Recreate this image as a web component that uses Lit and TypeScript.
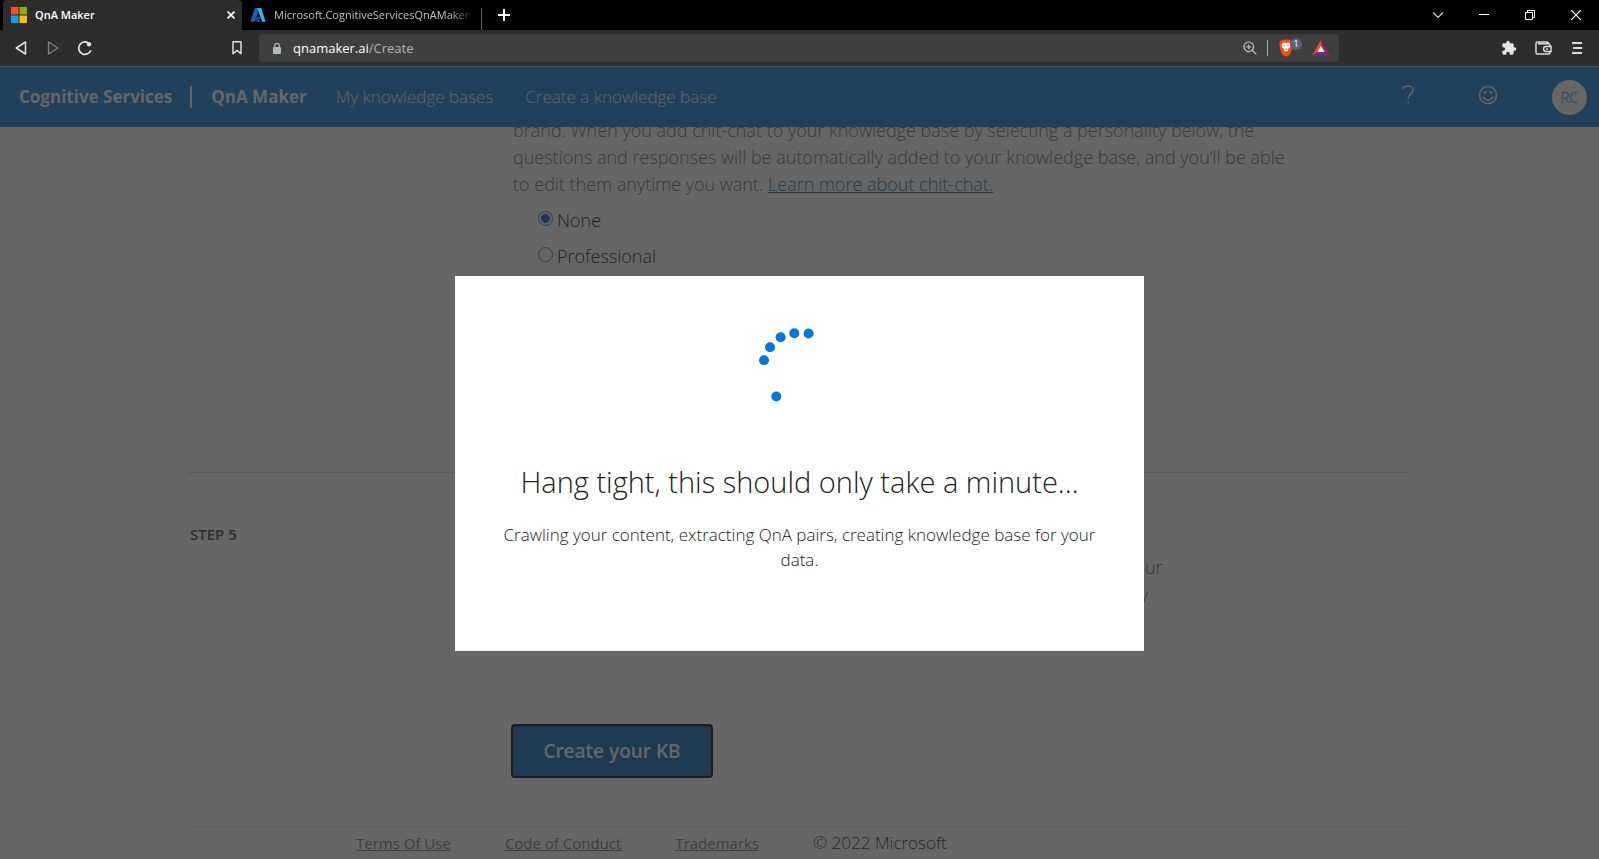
import { LitElement, html, css, svg } from "lit";
import { customElement, property, state } from "lit/decorators.js";

@customElement("browser-chrome")
class BrowserChrome extends LitElement {
  static styles = css`
    :host {
      display: block;
      font-family: "Open Sans", "Noto Sans", sans-serif;
      font-weight: 400;
      color: #fff;
      border-bottom: 1px solid #555;
    }
    button {
      border: 0;
      padding: 0;
      background: none;
      color: inherit;
      font: inherit;
      display: flex;
      align-items: center;
      justify-content: center;
      height: 100%;
    }
    svg { display: block; }
    .tabs {
      display: flex;
      align-items: center;
      height: 30px;
      background: #000;
      padding-left: 3px;
      font-size: 11px;
    }
    .tab {
      display: flex;
      align-items: center;
      box-sizing: border-box;
      width: 239px;
      height: 30px;
      padding: 0 7px 0 8px;
      gap: 8px;
    }
    .active {
      background: #2d2d2d;
      border-radius: 4px 4px 0 0;
      font-weight: 600;
    }
    .tab-title {
      flex: 1;
      overflow: hidden;
      white-space: nowrap;
    }
    .faded {
      color: #c4c4c4;
      mask-image: linear-gradient(to right, #000 88%, transparent);
    }
    .tab-line { width: 1px; height: 22px; background: #666; align-self: flex-end; }
    .plus { width: 44px; }
    .window { display: flex; height: 100%; margin-left: auto; }
    .window button { width: 46px; }
    .toolbar {
      display: flex;
      align-items: center;
      height: 36px;
      background: #2d2d2d;
    }
    .side {
      display: flex;
      align-items: center;
      box-sizing: border-box;
      width: 259px;
      height: 28px;
      padding: 0 6px 0 5px;
    }
    .side button { width: 32px; }
    .bookmark { margin-left: auto; }
    .side.extras { width: 260px; justify-content: flex-end; padding: 0 5px; }
    .side.extras button { width: 34px; }
    .address {
      flex: 1;
      display: flex;
      align-items: center;
      height: 28px;
      box-sizing: border-box;
      padding: 0 1px 0 13px;
      background: #3f3f3f;
      border-radius: 4px;
      font-size: 13px;
    }
    .url { margin-left: 11px; flex: 1; color: #b4b4b4; }
    .url b { color: #fff; font-weight: 400; }
    .address button { width: 35px; position: relative; }
    .bar-line { width: 1px; height: 16px; background: #aaa; }
    .count {
      position: absolute;
      left: 22px;
      top: 4px;
      width: 12px;
      height: 12px;
      border-radius: 6px;
      background: #5f6172;
      font-size: 9px;
      line-height: 12px;
    }
  `;

  render() {
    return html`
      <div class="tabs">
        <div class="tab active">
          <svg width="16" height="16" viewBox="0 0 16 16">
            <path fill="#f8511d" d="M0 0h7.5v7.5H0z" />
            <path fill="#80b903" d="M8.500 0H16v7.500H8.500z" />
            <path fill="#05a4f1" d="M0 8.500h7.500V16H0z" />
            <path fill="#ffba08" d="M8.500 8.500H16V16H8.500z" />
          </svg>
          <span class="tab-title">QnA Maker</span>
          <button aria-label="Close tab">
            <svg width="8" height="8" viewBox="0 0 8 8" stroke="#fff" stroke-width="1.6">
              <path d="M.5.5l7 7M7.500.5l-7 7" />
            </svg>
          </button>
        </div>
        <div class="tab">
          <svg width="16" height="16" viewBox="0 0 16 16">
            <path fill="#1565b4" d="M5.300 1h4.200L5.200 14.300a.8.8 0 0 1-.7.5H1.400a.7.7 0 0 1-.7-1L4.600 1.500A.8.8 0 0 1 5.300 1z" />
            <path fill="#0c4fa0" d="M5 10h6l-1.200 2.200H8l3 2.700H7.500L3.500 11z" />
            <path fill="#35b5ef" d="M6.500 1h4.200c.3 0 .6.200.7.500l3.900 12.300c.2.500-.1 1-.7 1h-3.300c.5 0 .8-.5.6-1L7.300 1.500A.8.8 0 0 0 6.500 1z" />
          </svg>
          <span class="tab-title faded">Microsoft.CognitiveServicesQnAMaker</span>
        </div>
        <span class="tab-line"></span>
        <button class="plus" aria-label="New tab">
          <svg width="12" height="12" viewBox="0 0 12 12" stroke="#fff" stroke-width="2">
            <path d="M6 0v12M0 6h12" />
          </svg>
        </button>
        <div class="window">
          <button aria-label="Search tabs">
            <svg width="12" height="12" viewBox="0 0 12 12" fill="none" stroke="#ddd" stroke-width="1.1">
              <path d="M1 3.500l5 5 5-5" />
            </svg>
          </button>
          <button aria-label="Minimize">
            <svg width="10" height="10" viewBox="0 0 10 10"><path fill="#fff" d="M0 4h10v1H0z" /></svg>
          </button>
          <button aria-label="Restore">
            <svg width="10" height="10" viewBox="0 0 10 10" fill="none" stroke="#fff">
              <path d="M.5 2.500h7v7h-7zM2.500 2.500v-2h7v7h-2" />
            </svg>
          </button>
          <button aria-label="Close">
            <svg width="10" height="10" viewBox="0 0 10 10" stroke="#fff" stroke-width="1.200">
              <path d="M0 0l10 10M10 0L0 10" />
            </svg>
          </button>
        </div>
      </div>
      <div class="toolbar">
        <div class="side">
          <button aria-label="Back">
            <svg width="14" height="16" viewBox="0 0 14 16" fill="none" stroke="#e4e4e4" stroke-width="1.500" stroke-linejoin="round">
              <path d="M11.500 2v12L2.200 8z" />
            </svg>
          </button>
          <button aria-label="Forward">
            <svg width="14" height="16" viewBox="0 0 14 16" fill="none" stroke="#808080" stroke-width="1.400" stroke-linejoin="round">
              <path d="M2.500 2v12l9.300-6z" />
            </svg>
          </button>
          <button aria-label="Reload">
            <svg width="16" height="16" viewBox="0 0 16 16" fill="none" stroke="#e4e4e4" stroke-width="1.700">
              <path d="M13.800 10.200A6.200 6.200 0 1 1 11 2.800" />
              <circle cx="12" cy="4.200" r="2.200" fill="#e4e4e4" stroke="none" />
            </svg>
          </button>
          <button class="bookmark" aria-label="Bookmark this tab">
            <svg width="12" height="16" viewBox="0 0 12 16" fill="none" stroke="#e4e4e4" stroke-width="1.400" stroke-linejoin="round">
              <path d="M2 1.800h8v12l-4-3.400-4 3.400z" />
            </svg>
          </button>
        </div>
        <div class="address">
          <svg width="10" height="13" viewBox="0 0 10 13">
            <path d="M2.700 6V3.600a2.300 2.300 0 0 1 4.600 0V6" fill="none" stroke="#b4b7bb" stroke-width="1.200" />
            <rect x="1" y="5" width="8" height="7" rx="1" fill="#b4b7bb" />
          </svg>
          <span class="url"><b>qnamaker.ai</b>/Create</span>
          <button aria-label="Zoom">
            <svg width="14" height="14" viewBox="0 0 14 14" fill="none" stroke="#c4c4c4" stroke-width="1.200">
              <circle cx="5.800" cy="5.800" r="4.800" />
              <path d="M9.300 9.300l4 4M5.800 3.400v4.800M3.400 5.800h4.800" />
            </svg>
          </button>
          <span class="bar-line"></span>
          <button aria-label="Brave Shields">
            <svg width="14" height="18" viewBox="0 0 14 18">
              <path fill="#fb4b0b" d="M4 .5h6l1.400 1.300 1.300-.1 1.100 2-.5 1.500.4 1.300-2.100 7.800c-.2.900-3.500 3.100-4.600 3.500C5.900 17.400 2.600 15.200 2.400 14.300L.3 6.500l.4-1.300-.5-1.500 1.100-2 1.300.1z" />
              <path fill="#fff" d="M4.200 3.600l2.800.4 2.800-.4 1.800 2.300-.8 1.300.2 1-2 1.700.3 1.300L7 12.800l-2.300-1.600.3-1.300-2-1.700.2-1-.8-1.300z" />
              <path fill="#fb4b0b" d="M3.600 6l2.300.6-.4 1zM10.400 6l-2.300.6.4 1zM5.800 10.300L7 9.600l1.200.7L7 11z" />
            </svg>
            <span class="count">1</span>
          </button>
          <button aria-label="Brave Rewards">
            <svg width="18" height="16" viewBox="0 0 18 16">
              <path fill="#ff4724" d="M9 0L0 15.500l6-3.800L9 6z" />
              <path fill="#9e1f63" d="M9 0l9 15.500-6-3.800L9 6z" />
              <path fill="#662d91" d="M0 15.500h18l-6-3.800H6z" />
              <path fill="#fff" d="M9 5.800l3.500 6.200h-7z" />
            </svg>
          </button>
        </div>
        <div class="side extras">
          <button aria-label="Extensions">
            <svg width="16" height="16" viewBox="0 0 24 24">
              <path fill="#e4e4e4" d="M20.500 11H19V7c0-1.100-.9-2-2-2h-4V3.500a2.500 2.500 0 0 0-5 0V5H4c-1.100 0-2 .9-2 2v3.800h1.500a2.700 2.700 0 0 1 0 5.400H2V20c0 1.100.9 2 2 2h3.800v-1.500a2.700 2.700 0 0 1 5.400 0V22H17c1.100 0 2-.9 2-2v-4h1.500a2.500 2.500 0 0 0 0-5z" />
            </svg>
          </button>
          <button aria-label="Wallet">
            <svg width="17" height="14" viewBox="0 0 17 14" fill="none" stroke="#dcdcdc" stroke-width="1.500">
              <path d="M15 4.800V4.300a1.500 1.500 0 0 0-1.500-1.500H3M13.500 2.800A1.800 1.800 0 0 0 11.700 1H2.500A1.500 1.500 0 0 0 1 2.500v9A1.500 1.500 0 0 0 2.500 13h11a1.500 1.500 0 0 0 1.500-1.500V11M16 5.600h-5a2.400 2.400 0 0 0 0 4.800h5z" />
              <path d="M11 8h2" />
            </svg>
          </button>
          <button aria-label="Menu">
            <svg width="10" height="12" viewBox="0 0 10 12"><path fill="#dcdcdc" d="M0 0h10v2H0zM1 5h9v2H1zM0 10h10v2H0z" /></svg>
          </button>
        </div>
      </div>
    `;
  }
}

@customElement("site-header")
class SiteHeader extends LitElement {
  static styles = css`
    :host {
      display: flex;
      align-items: center;
      height: 60px;
      box-sizing: border-box;
      padding: 0 12px 0 19px;
      background: #50a0e4;
      color: #fff;
      font-family: "Open Sans", "Noto Sans", sans-serif;
      font-size: 17px;
      white-space: nowrap;
    }
    a { color: inherit; text-decoration: none; }
    .brand { font-weight: 700; }
    .divider { width: 2px; height: 22px; margin: 0 19px 0 18px; background: #fff; }
    nav { display: flex; gap: 32px; margin-left: 29px; font-weight: 300; }
    .actions { display: flex; align-items: center; margin-left: auto; }
    button { border: 0; padding: 0; background: none; color: inherit; font: inherit; }
    .icon {
      display: flex;
      align-items: center;
      justify-content: center;
      width: 80px;
      padding-bottom: 4px;
    }
    .avatar {
      width: 35px;
      height: 35px;
      margin-left: 24px;
      border-radius: 50%;
      background: #fff;
      color: #50a0e4;
      font-size: 15px;
    }
  `;

  render() {
    return html`
      <a class="brand" href="#services">Cognitive Services</a>
      <span class="divider"></span>
      <a class="brand" href="#maker">QnA Maker</a>
      <nav>
        <a href="#bases">My knowledge bases</a>
        <a href="#create">Create a knowledge base</a>
      </nav>
      <div class="actions">
        <button class="icon" aria-label="Help">
          <svg width="12" height="20" viewBox="0 0 12 20" fill="none" stroke="#fff" stroke-width="1.300">
            <path d="M1 4.200C1.600 2 3.500 1 5.800 1 8.700 1 11 2.700 11 5.400 11 9 6.300 9.300 6.300 14" />
            <path d="M6.300 16.500v2" stroke-width="1.600" />
          </svg>
        </button>
        <button class="icon" aria-label="Feedback">
          <svg width="20" height="20" viewBox="0 0 20 20" fill="none" stroke="#fff" stroke-width="1.500">
            <circle cx="10" cy="10" r="8.600" />
            <path d="M5.300 11.800a5 5 0 0 0 9.400 0" />
            <circle cx="7" cy="7.300" r="1.300" fill="#fff" stroke="none" />
            <circle cx="13" cy="7.300" r="1.300" fill="#fff" stroke="none" />
          </svg>
        </button>
        <button class="avatar" aria-label="Account">RC</button>
      </div>
    `;
  }
}

@customElement("progress-dialog")
class ProgressDialog extends LitElement {
  @property() heading = "";
  @property() message = "";

  static styles = css`
    :host {
      position: absolute;
      inset: 0;
      display: flex;
      align-items: center;
      justify-content: center;
      background: rgba(0, 0, 0, 0.6);
      font-family: "Open Sans", "Noto Sans", sans-serif;
      font-weight: 300;
      color: #222;
      text-align: center;
    }
    .panel {
      box-sizing: border-box;
      width: 689px;
      padding: 53px 40px 79px;
      background: #fff;
    }
    svg { display: block; margin: 0 auto; }
    h1 { margin: 53px 0 20px; font-size: 29px; line-height: 40px; font-weight: 300; }
    p { margin: 0; font-size: 17px; line-height: 25px; }
  `;

  private dots = [
    [4, 31.200],
    [10, 18.200],
    [20.600, 8.200],
    [34.300, 4.300],
    [48.600, 4.500],
    [16.300, 67.500],
  ];

  render() {
    return html`
      <div class="panel" role="dialog" aria-labelledby="title">
        <svg width="80" height="80" viewBox="0 0 80 80" fill="#0078d7" overflow="visible">
          ${this.dots.map(([x, y]) => svg`<circle cx=${x} cy=${y} r="5" />`)}
        </svg>
        <h1 id="title">${this.heading}</h1>
        <p>${this.message}</p>
      </div>
    `;
  }
}

@customElement("app-root")
class AppRoot extends LitElement {
  @state() private personality = "None";

  static styles = css`
    :host {
      display: flex;
      flex-direction: column;
      height: 100vh;
      overflow: hidden;
      background: #fff;
      font-family: "Open Sans", "Noto Sans", sans-serif;
      font-weight: 300;
      font-size: 18px;
      line-height: 28px;
      color: #606060;
    }
    .view {
      position: relative;
      flex: 1;
      min-height: 0;
      overflow: hidden;
      display: flex;
      flex-direction: column;
    }
    site-header { flex: none; }
    main { flex: 1; min-height: 0; overflow: hidden; }
    .page { max-width: 1219px; margin: -10px auto 0; }
    .step { display: grid; grid-template-columns: 323px 1fr; }
    .chitchat { height: 355px; border-bottom: 1px solid #e8e8e8; }
    .create { height: 353px; border-bottom: 1px solid #e8e8e8; }
    p { margin: 0; color: #8c8c8c; }
    .intro { max-width: 780px; line-height: 27px; }
    .about { max-width: 680px; }
    .intro a { color: #5c8cbc; }
    .choices { margin: 4px 0 0 25px; padding: 0; border: 0; color: #505050; }
    .choice { display: flex; align-items: center; gap: 4px; height: 36px; }
    .choice input {
      appearance: none;
      box-sizing: border-box;
      width: 15px;
      height: 15px;
      margin: 0 0 4px;
      border: 1px solid #909090;
      border-radius: 50%;
    }
    .choice input:checked {
      border-color: #4a90f0;
      background: radial-gradient(#3f87ee 4px, transparent 5px);
    }
    .step-name {
      margin: 49px 0 0;
      font-size: 15px;
      line-height: 24px;
      font-weight: 600;
      color: #707070;
    }
    h2 { margin: 44px 0 4px; font-size: 24px; line-height: 32px; font-weight: 300; }
    .submit {
      width: 202px;
      height: 54px;
      margin: 87px 0 0 -2px;
      border: 2px solid #484848;
      border-radius: 4px;
      background: #4b91cf;
      color: #fff;
      font: 600 19px "Open Sans", "Noto Sans", sans-serif;
    }
    footer { display: flex; padding: 2px 0 0 166px; gap: 54px; }
    footer a { font-size: 15px; font-weight: 400; color: #989898; }
    footer span { font-size: 17px; }
  `;

  private names = ["None", "Professional", "Friendly", "Witty", "Caring"];

  render() {
    return html`
      <browser-chrome></browser-chrome>
      <div class="view">
        <site-header></site-header>
        <main>
          <div class="page">
            <section class="step chitchat">
              <span></span>
              <div>
                <p class="intro">
                  brand. When you add chit-chat to your knowledge base by selecting a personality below, the
                  questions and responses will be automatically added to your knowledge base, and you’ll be able
                  to edit them anytime you want. <a href="#chitchat">Learn more about chit-chat.</a>
                </p>
                <fieldset class="choices">
                  ${this.names.map(
                    (name) => html`
                      <label class="choice">
                        <input
                          type="radio"
                          name="personality"
                          .checked=${this.personality === name}
                          @change=${() => (this.personality = name)}
                        />
                        ${name}
                      </label>
                    `
                  )}
                </fieldset>
              </div>
            </section>
            <section class="step create">
              <h3 class="step-name">STEP 5</h3>
              <div>
                <h2>Create your KB</h2>
                <p class="about">
                  The tool will look through your documents and create a knowledge base for your
                  service. If you are not using an existing document, the tool will create an empty
                  knowledge base table which you can edit.
                </p>
                <button class="submit">Create your KB</button>
              </div>
            </section>
            <footer>
              <a href="#terms">Terms Of Use</a>
              <a href="#conduct">Code of Conduct</a>
              <a href="#trademarks">Trademarks</a>
              <span>© 2022 Microsoft</span>
            </footer>
          </div>
        </main>
        <progress-dialog
          heading="Hang tight, this should only take a minute..."
          message="Crawling your content, extracting QnA pairs, creating knowledge base for your data."
        ></progress-dialog>
      </div>
    `;
  }
}
